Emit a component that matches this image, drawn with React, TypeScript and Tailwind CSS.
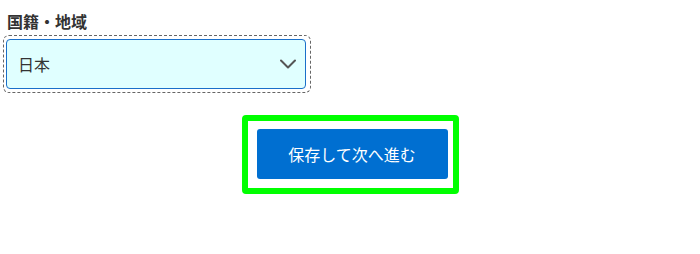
export default function App() {
  return (
    <div
      className="min-h-[254px] w-[700px] bg-white text-[#333]"
      style={{ fontFamily: '"Noto Sans CJK JP", "Noto Sans", sans-serif' }}
    >
      <div className="px-[3px] pt-[9px]">
        {/* Field */}
        <label className="block pl-[4px] text-[16px] font-bold leading-[24px]">国籍・地域</label>
        <div className="mt-[2px] w-[308px] rounded-[6px] border border-dashed border-[#666] pb-[3px] pl-[2px] pr-[3px] pt-[3px]">
          <div className="flex h-[50px] w-[300px] items-center rounded-[4px] border border-[#1a6fc9] bg-[#e0ffff] pl-[11px] pr-[9px]">
            <span className="flex-1 text-[16px] leading-none">日本</span>
            <svg width="16" height="10" viewBox="0 0 16 10" fill="none" className="text-[#555]">
              <polyline points="1,1.5 8,8.5 15,1.5" stroke="currentColor" strokeWidth="2" strokeLinecap="round" strokeLinejoin="round" />
            </svg>
          </div>
        </div>
      </div>

      {/* Submit */}
      <div className="mt-[22px] flex justify-center">
        <div className="rounded-[4px] border-[6px] border-[#00ff00] pb-[9px] pl-[9px] pr-[5px] pt-[8px]">
          <button className="h-[50px] w-[191px] rounded-[3px] bg-[#006fd1] text-[16px] text-white">
            保存して次へ進む
          </button>
        </div>
      </div>
    </div>
  )
}
